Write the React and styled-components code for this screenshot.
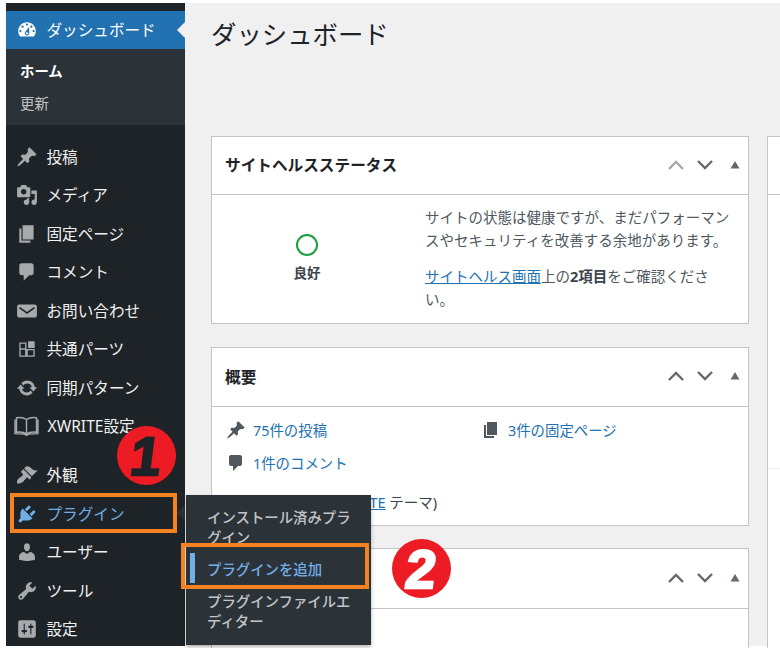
import React from "react";
import styled, { createGlobalStyle } from "styled-components";

const Global = createGlobalStyle`
  html, body { margin: 0; padding: 0; background: #fff; }
  body { font-family: "Noto Sans", "Noto Sans CJK JP", sans-serif; }
  * { box-sizing: border-box; }
`;

const P = {
  dashboard: "M3.76 16h12.48c1.1-1.37 1.76-3.11 1.76-5 0-4.42-3.58-8-8-8s-8 3.58-8 8c0 1.89.66 3.63 1.76 5zM10 4c.55 0 1 .45 1 1s-.45 1-1 1-1-.45-1-1 .45-1 1-1zM6 6c.55 0 1 .45 1 1s-.45 1-1 1-1-.45-1-1 .45-1 1-1zm8 0c.55 0 1 .45 1 1s-.45 1-1 1-1-.45-1-1 .45-1 1-1zm-5.37 5.55L12 7v6c0 1.1-.9 2-2 2s-2-.9-2-2c0-.57.24-1.08.63-1.45zM4 10c.55 0 1 .45 1 1s-.45 1-1 1-1-.45-1-1 .45-1 1-1zm12 0c.55 0 1 .45 1 1s-.45 1-1 1-1-.45-1-1 .45-1 1-1zm-5 3c0-.55-.45-1-1-1s-1 .45-1 1 .45 1 1 1 1-.45 1-1z",
  post: "M10.44 3.02l1.82-1.82 6.36 6.35-1.83 1.82c-1.05-.68-2.48-.57-3.41.36l-.75.75c-.92.93-1.04 2.35-.35 3.41l-1.83 1.82-2.41-2.41-2.8 2.79c-.42.42-3.38 2.71-3.8 2.29s1.86-3.39 2.28-3.81l2.79-2.79L4.1 9.36l1.83-1.82c1.05.69 2.48.57 3.4-.36l.75-.75c.93-.92 1.05-2.35.36-3.41z",
  media: "M13 11V4c0-.55-.45-1-1-1h-1.67L9 1H5L3.67 3H2c-.55 0-1 .45-1 1v7c0 .55.45 1 1 1h10c.55 0 1-.45 1-1zM7 4.5c1.38 0 2.5 1.12 2.5 2.5S8.38 9.5 7 9.5 4.5 8.38 4.5 7 5.62 4.5 7 4.5zM14 6h5v10.5c0 1.38-1.12 2.5-2.5 2.5S14 17.88 14 16.500s1.12-2.5 2.5-2.5c.17 0 .34.02.5.05V9h-3V6zm-4 8.05V13h2v3.5c0 1.38-1.12 2.5-2.5 2.5S7 17.88 7 16.5 8.12 14 9.5 14c.17 0 .34.02.5.05z",
  page: "M6 15V2h10v13H6zm-1 1h8v2H3V5h2v11z",
  comment: "M5 2h9c1.1 0 2 .9 2 2v7c0 1.1-.9 2-2 2h-2l-5 5v-5H5c-1.1 0-2-.9-2-2V4c0-1.1.9-2 2-2z",
  mail: "M3 4h14c1.1 0 2 .9 2 2v8c0 1.1-.9 2-2 2H3c-1.1 0-2-.9-2-2V6c0-1.100.9-2 2-2zm.6 2.3L2.700 7.500 10 12.700l7.300-5.200-.9-1.200L10 10.800z",
  parts: "M3 4h6.500v13H3zm1.200 1.200v4.200h4.100V5.200zm0 5.400v5.200h4.100v-5.200zM9.500 10H17v7H9.500zm1.200 1.200v4.600h5.100v-4.600zM11 3h6v6h-6z",
  update: "M10.2 3.28c3.53 0 6.43 2.61 6.92 6h2.08l-3.5 4-3.5-4h2.32c-.45-1.97-2.21-3.44-4.32-3.44-1.45 0-2.73.71-3.54 1.8L4.95 5.66C6.23 4.2 8.11 3.28 10.2 3.28zm-.4 13.44c-3.52 0-6.43-2.61-6.92-6H.8l3.5-4c1.17 1.33 2.33 2.67 3.5 4H5.48c.45 1.97 2.21 3.44 4.32 3.44 1.45 0 2.73-.71 3.54-1.8l1.71 1.98c-1.28 1.46-3.16 2.38-5.25 2.38z",
  appearance: "M14.48 11.06L7.41 3.99l1.5-1.5c.5-.56 2.3-.47 3.51.32 1.21.8 1.43 1.28 2.91 2.1 1.18.64 2.45 1.26 4.45.85zm-.71.71L6.7 4.7 4.93 6.47c-.39.39-.39 1.02 0 1.41l1.06 1.06c.39.39.39 1.03 0 1.42-.6.6-1.43 1.11-2.21 1.69-.35.26-.7.53-1.01.84C1.43 13.23.4 16.85 1.1 17.55c.71.71 4.33-.32 5.68-1.67.31-.31.58-.66.84-1.01.58-.78 1.09-1.61 1.69-2.21.39-.39 1.03-.39 1.42 0l1.06 1.06c.39.39 1.02.39 1.41 0z",
  plugin: "M13.11 4.36L9.87 7.6 8 5.73l3.24-3.24c.35-.34 1.05-.2 1.56.32.52.51.66 1.21.31 1.55zm-8 1.77l.91-1.12 9.01 9.01-1.19.84c-.71.71-2.63 1.16-3.82 1.16H6.14L4.9 17.26c-.59.59-1.54.59-2.12 0-.59-.58-.59-1.53 0-2.12l1.24-1.24v-3.88c0-1.13.4-3.19 1.09-3.89zm7.26 3.97l3.24-3.24c.34-.35 1.04-.21 1.55.31.52.51.66 1.21.31 1.55l-3.24 3.25z",
  users: "M10 9.25c-2.27 0-2.73-3.44-2.73-3.44C7 4.02 7.82 2 9.97 2c2.16 0 2.98 2.02 2.71 3.81 0 0-.41 3.44-2.68 3.44zm0 2.57L12.72 10c2.39 0 4.52 2.33 4.52 4.53v2.49s-3.65 1.13-7.24 1.13c-3.65 0-7.24-1.13-7.24-1.13v-2.49c0-2.25 1.94-4.48 4.47-4.48z",
  tools: "M16.68 9.77c-1.34 1.34-3.3 1.67-4.95.99l-5.41 6.52c-.99.99-2.59.99-3.58 0s-.99-2.59 0-3.57l6.52-5.42c-.68-1.65-.35-3.61.99-4.95 1.28-1.28 3.12-1.62 4.72-1.06l-2.89 2.89 2.82 2.82 2.86-2.87c.53 1.58.18 3.39-1.08 4.65zM3.81 16.21c.4.39 1.04.39 1.43 0 .4-.4.4-1.04 0-1.43-.39-.4-1.03-.4-1.43 0-.39.39-.39 1.03 0 1.43z",
  settings: "M18 16V4c0-1.1-.9-2-2-2H4c-1.1 0-2 .9-2 2v12c0 1.1.9 2 2 2h12c1.1 0 2-.9 2-2zM8 11h1c.55 0 1 .45 1 1s-.45 1-1 1H8v1.5c0 .28-.22.5-.5.5s-.5-.22-.5-.5V13H6c-.55 0-1-.45-1-1s.45-1 1-1h1V5.5c0-.28.22-.5.5-.5s.5.22.5.5V11zm5-2h-1c-.55 0-1-.45-1-1s.45-1 1-1h1V5.5c0-.28.22-.5.5-.5s.5.22.5.5V7h1c.55 0 1 .45 1 1s-.45 1-1 1h-1v5.500c0 .28-.22.5-.5.5s-.5-.22-.5-.5V9z",
};

const Glyph = ({ d, size = 22 }) => (
  <svg width={size} height={size} viewBox="0 0 20 20" fill="currentColor" fillRule="evenodd" style={{ flex: "none" }}>
    <path d={d} />
  </svg>
);

const Book = () => (
  <svg width="25" height="22" viewBox="0 0 25 22" fill="none" stroke="currentColor" strokeWidth="1.4" style={{ flex: "none", marginLeft: -2 }}>
    <path d="M12.500 4.500C10 2.800 6 2.300 2.500 2.800v14.400c3.500-.5 7.500 0 10 1.700 2.500-1.700 6.500-2.200 10-1.700V2.800c-3.500-.5-7.500 0-10 1.700zM12.500 4.500v14.400M1 4.500v14.200l9.500.4 2 1.400 2-1.400 9.500-.4V4.500" />
  </svg>
);

const Page = styled.div`
  position: relative;
  display: flex;
  width: 780px;
  height: 648px;
  padding: 3px 0 2px 6px;
  overflow: hidden;
  background: #fff;
`;

const Sidebar = styled.nav`
  flex: none;
  width: 179px;
  padding-top: 8px;
  background: #1d2327;
  color: #f0f0f1;
  font-size: 15.600px;
  line-height: 22px;
`;

const CurrentRow = styled.div`
  position: relative;
  display: flex;
  align-items: center;
  gap: 8.500px;
  height: 37.500px;
  padding-left: 10px;
  background: #2271b1;
  color: #fff;
  &::after {
    content: "";
    position: absolute;
    right: 0;
    top: 11px;
    border: 8px solid transparent;
    border-left: 0;
    border-right-color: #f0f0f1;
  }
`;

const SubMenu = styled.div`
  display: flex;
  flex-direction: column;
  height: 76.500px;
  margin-bottom: 12.300px;
  padding: 7px 0 0 14px;
  background: #2c3338;
`;

const SubLink = styled.div`
  height: 32px;
  font-size: 14.400px;
  line-height: 32px;
  font-weight: ${(p) => (p.$current ? 700 : 400)};
  color: ${(p) => (p.$current ? "#fff" : "#c3c4c7")};
`;

const MenuRow = styled.div`
  position: relative;
  display: flex;
  align-items: center;
  gap: 8.500px;
  height: 38.500px;
  padding-left: 10px;
  margin-bottom: ${(p) => (p.$sep ? "10.500px" : "0")};
  color: ${(p) => (p.$hot ? "#72aee6" : "#f0f0f1")};
  ${(p) =>
    p.$hot &&
    `&::after {
      content: "";
      position: absolute;
      right: 0;
      top: 11px;
      border: 8px solid transparent;
      border-left: 0;
      border-right-color: #2c3338;
    }`}
`;

const MenuIcon = styled.span`
  display: flex;
  color: ${(p) => (p.$hot ? "#72aee6" : p.$current ? "#fff" : "#a7aaad")};
`;

const Main = styled.main`
  flex: 1;
  min-width: 0;
  padding-left: 26px;
  background: #f0f0f1;
`;

const Title = styled.h1`
  margin: 0;
  height: 133px;
  padding-top: 14px;
  font-size: 25.400px;
  line-height: 34px;
  font-weight: 400;
  color: #1d2327;
`;

const Columns = styled.div`
  display: grid;
  grid-template-columns: 538px 1fr;
  gap: 18px;
`;

const Stack = styled.div`
  display: flex;
  flex-direction: column;
  gap: 22.500px;
`;

const Card = styled.section`
  background: #fff;
  border: 1px solid #c3c4c7;
  height: ${(p) => p.$h}px;
  flex: none;
`;

const CardHead = styled.header`
  display: flex;
  align-items: center;
  height: ${(p) => p.$h || 58}px;
  padding: 0 8px ${(p) => (p.$h === 59 ? 1 : 2)}px 13px;
  border-bottom: 1px solid #c3c4c7;
`;

const CardTitle = styled.h2`
  flex: 1;
  margin: 0;
  font-size: 15.650px;
  font-weight: 700;
  color: #1d2327;
`;

const Controls = styled.div`
  display: flex;
  align-items: center;
  gap: 13px;
  color: #646970;
`;

const Chevron = ({ up, faded }) => (
  <svg width="16" height="10" viewBox="0 0 16 10" fill="none" stroke={faded ? "#a7aaad" : "currentColor"} strokeWidth="2.400">
    <path d={up ? "M1 9l7-7 7 7" : "M1 1l7 7 7-7"} />
  </svg>
);

const Toggle = () => (
  <svg width="10" height="8" viewBox="0 0 10 8" fill="currentColor" style={{ marginLeft: 4 }}>
    <path d="M5 0l4.500 7.500H.5z" />
  </svg>
);

const HeadControls = ({ faded }) => (
  <Controls>
    <Chevron up faded={faded} />
    <Chevron />
    <Toggle />
  </Controls>
);

const HealthBody = styled.div`
  display: grid;
  grid-template-columns: 190px 1fr;
  column-gap: 23px;
  padding: 10.500px 0 0 0;
`;

const HealthStatus = styled.div`
  display: flex;
  flex-direction: column;
  align-items: center;
  gap: 6px;
  padding-top: 28.500px;
`;

const Ring = styled.div`
  width: 22px;
  height: 22px;
  border: 2px solid #1e9e3e;
  border-radius: 50%;
`;

const StatusLabel = styled.div`
  font-size: 13.500px;
  font-weight: 700;
  line-height: 22px;
  color: #3c434a;
`;

const Para = styled.p`
  width: 312px;
  margin: 0 0 13px;
  font-size: 14.500px;
  line-height: 23px;
  color: #50575e;
`;

const Link = styled.a`
  color: #2271b1;
  text-decoration: ${(p) => (p.$plain ? "none" : "underline")};
`;

const Strong = styled.b`
  color: #3c434a;
`;

const Glance = styled.div`
  display: grid;
  grid-template-columns: 255px 1fr;
  grid-auto-rows: 33px;
  padding: 7px 0 0 14px;
  font-size: 14.400px;
  line-height: 33px;
`;

const GlanceItem = styled.div`
  display: flex;
  align-items: center;
  gap: 7px;
  color: #50575e;
`;

const VersionLine = styled.div`
  padding: 10px 0 0 16px;
  font-size: 14.500px;
  line-height: 24px;
  color: #3c434a;
  white-space: nowrap;
`;

const SideCard = styled.section`
  height: 520px;
  background: #fff;
  border-left: 1px solid #c3c4c7;
  border-top: 1px solid #c3c4c7;
`;

const SideHead = styled.div`
  height: 58px;
  border-bottom: 1px solid #c3c4c7;
`;

const SideRule = styled.div`
  height: 274px;
  border-bottom: 1px solid #f0f0f1;
`;

const Flyout = styled.div`
  position: absolute;
  left: 186px;
  top: 495px;
  width: 185px;
  height: 150px;
  padding-top: 13px;
  background: #2c3338;
  box-shadow: 0 2px 4px rgba(0, 0, 0, 0.3);
  font-size: 14.400px;
  font-weight: 500;
  line-height: 20px;
`;

const FlyItem = styled.div`
  padding: 0 ${(p) => (p.$current ? "14px" : "16px")} 0 21px;
  margin-bottom: 12px;
  color: ${(p) => (p.$current ? "#72aee6" : "#c3c4c7")};
`;

const Marker = styled.div`
  position: absolute;
  left: 190px;
  top: 553px;
  width: 5px;
  height: 30px;
  background: #72aee6;
`;

const Frame = styled.div`
  position: absolute;
  left: ${(p) => p.$x}px;
  top: ${(p) => p.$y}px;
  width: ${(p) => p.$w}px;
  height: ${(p) => p.$h}px;
  border: 4px solid #f58220;
`;

const Badge = styled.div`
  position: absolute;
  left: ${(p) => p.$x}px;
  top: ${(p) => p.$y}px;
  width: 59px;
  height: 59px;
  display: flex;
  align-items: center;
  justify-content: center;
  border-radius: 50%;
  background: #ed1c24;
  color: ${(p) => p.$ink};
  -webkit-text-stroke: 2.500px ${(p) => p.$ink};
  font-family: "Liberation Sans", sans-serif;
  font-size: 54px;
  font-weight: 700;
  line-height: 1;
`;

const Numeral = styled.span`
  display: block;
  transform: skewX(-7deg);
`;

const items = [
  ["post", "投稿"],
  ["media", "メディア"],
  ["page", "固定ページ"],
  ["comment", "コメント"],
  ["mail", "お問い合わせ"],
  ["parts", "共通パーツ"],
  ["update", "同期パターン"],
];
const items2 = [
  ["users", "ユーザー"],
  ["tools", "ツール"],
  ["settings", "設定"],
];

export default function App() {
  return (
    <>
      <Global />
      <Page>
        <Sidebar>
          <CurrentRow>
            <MenuIcon $current><Glyph d={P.dashboard} /></MenuIcon>
            ダッシュボード
          </CurrentRow>
          <SubMenu>
            <SubLink $current>ホーム</SubLink>
            <SubLink>更新</SubLink>
          </SubMenu>
          {items.map(([k, t]) => (
            <MenuRow key={k}>
              <MenuIcon><Glyph d={P[k]} /></MenuIcon>
              {t}
            </MenuRow>
          ))}
          <MenuRow $sep>
            <MenuIcon><Book /></MenuIcon>
            XWRITE設定
          </MenuRow>
          <MenuRow>
            <MenuIcon><Glyph d={P.appearance} /></MenuIcon>
            外観
          </MenuRow>
          <MenuRow $hot>
            <MenuIcon $hot><Glyph d={P.plugin} /></MenuIcon>
            プラグイン
          </MenuRow>
          {items2.map(([k, t]) => (
            <MenuRow key={k}>
              <MenuIcon><Glyph d={P[k]} /></MenuIcon>
              {t}
            </MenuRow>
          ))}
        </Sidebar>
        <Main>
          <Title>ダッシュボード</Title>
          <Columns>
            <Stack>
              <Card $h={188}>
                <CardHead>
                  <CardTitle>サイトヘルスステータス</CardTitle>
                  <HeadControls faded />
                </CardHead>
                <HealthBody>
                  <HealthStatus>
                    <Ring />
                    <StatusLabel>良好</StatusLabel>
                  </HealthStatus>
                  <div>
                    <Para>サイトの状態は健康ですが、まだパフォーマンスやセキュリティを改善する余地があります。</Para>
                    <Para>
                      <Link>サイトヘルス画面</Link>上の<Strong>2項目</Strong>をご確認くださ<br />い。
                    </Para>
                  </div>
                </HealthBody>
              </Card>
              <Card $h={179}>
                <CardHead $h={59}>
                  <CardTitle>概要</CardTitle>
                  <HeadControls />
                </CardHead>
                <Glance>
                  <GlanceItem>
                    <Glyph d={P.post} size={20} />
                    <Link $plain>75件の投稿</Link>
                  </GlanceItem>
                  <GlanceItem>
                    <Glyph d={P.page} size={20} />
                    <Link $plain>3件の固定ページ</Link>
                  </GlanceItem>
                  <GlanceItem>
                    <Glyph d={P.comment} size={20} />
                    <Link $plain>1件のコメント</Link>
                  </GlanceItem>
                </Glance>
                <VersionLine>
                  WordPress 6.5 (<Link>XWRITE</Link> テーマ)
                </VersionLine>
              </Card>
              <Card $h={120}>
                <CardHead $h={60}>
                  <CardTitle />
                  <HeadControls />
                </CardHead>
              </Card>
            </Stack>
            <SideCard>
              <SideHead />
              <SideRule />
            </SideCard>
          </Columns>
        </Main>
        <Flyout>
          <FlyItem>インストール済みプラグイン</FlyItem>
          <FlyItem $current>プラグインを追加</FlyItem>
          <FlyItem>プラグインファイルエディター</FlyItem>
        </Flyout>
        <Marker />
        <Frame $x={10} $y={493} $w={167} $h={40} />
        <Frame $x={181} $y={543} $w={188} $h={46} />
        <Badge $x={117} $y={426} $ink="#1d2327"><Numeral>1</Numeral></Badge>
        <Badge $x={392} $y={539} $ink="#fff"><Numeral>2</Numeral></Badge>
      </Page>
    </>
  );
}
